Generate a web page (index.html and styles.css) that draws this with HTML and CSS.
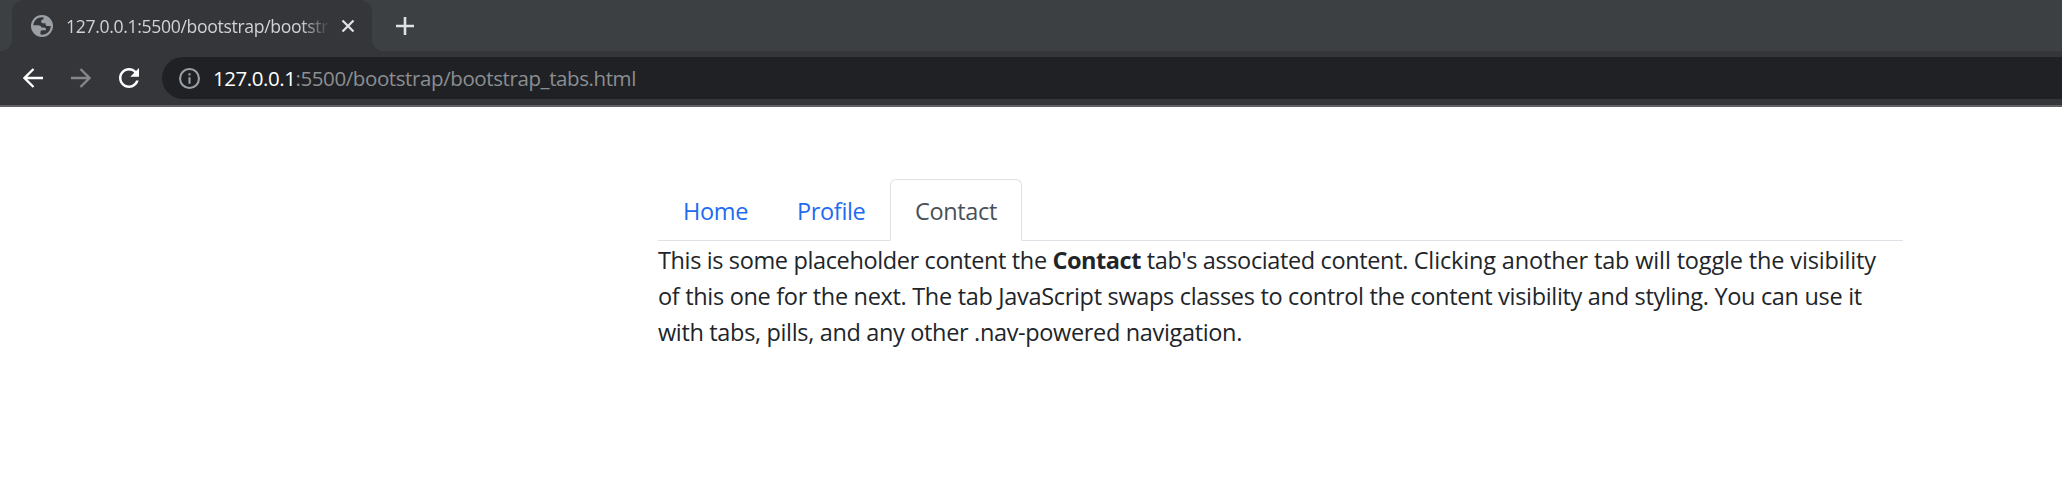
FILE: index.html
```html
<!DOCTYPE html>
<html lang="en">
<head>
<meta charset="utf-8">
<title>Bootstrap tabs</title>
<link rel="stylesheet" href="styles.css">
</head>
<body>
<header class="browser">
  <div class="tab-strip">
    <div class="browser-tab">
      <svg class="globe" viewBox="0 0 22 22"><circle cx="11" cy="11" r="11"/><path class="sea" d="M12.500 2.300C7 1.800 2.600 5.500 2.300 10.300H7c2.500 0 3 1 3.500 2.200H13c1.200 0 2 .8 2 2v.8h-3.500c-1.500 0-2 .8-2 2v2.300c5.500.8 10.200-3 10.200-8.600h-3.500c-1 0-1.700-.8-1.700-2V8.200h-2.300c-1.200 0-2-.7-2-1.800 0-1.400.8-2 2.300-2z"/></svg>
      <span class="tab-title">127.0.0.1:5500/bootstrap/bootstr</span>
      <svg class="close" viewBox="0 0 14 14"><path d="M1.500 1.500l11 11M12.500 1.500l-11 11"/></svg>
    </div>
    <svg class="plus" viewBox="0 0 18 18"><path d="M9 0v18M0 9h18"/></svg>
  </div>
  <div class="toolbar">
    <svg class="nav-icon" viewBox="0 0 20 20"><path d="M20 10H2M10.500 1L1.500 10l9 9"/></svg>
    <svg class="nav-icon disabled" viewBox="0 0 20 20"><path d="M0 10h18M9.500 1l9 9-9 9"/></svg>
    <svg class="nav-icon reload" viewBox="4 4 16 16"><path d="M17.650 6.350C16.200 4.900 14.210 4 12 4c-4.420 0-7.990 3.580-7.990 8s3.570 8 7.990 8c3.730 0 6.840-2.550 7.730-6h-2.080c-.82 2.330-3.040 4-5.650 4-3.310 0-6-2.690-6-6s2.690-6 6-6c1.660 0 3.140.69 4.220 1.780L13 11h7V4l-2.350 2.350z"/></svg>
    <div class="omnibox">
      <svg class="info" viewBox="0 0 20 20"><circle cx="10" cy="10" r="9"/><path d="M10 8.800V15M10 5v2.200"/></svg>
      <span class="url"><span class="host">127.0.0.1</span><span class="path">:5500/bootstrap/bootstrap_tabs.html</span></span>
    </div>
  </div>
</header>
<main class="container">
  <nav class="nav-tabs">
    <a class="nav-link home">Home</a>
    <a class="nav-link profile">Profile</a>
    <a class="nav-link active">Contact</a>
  </nav>
  <p class="tab-pane">
    <span class="line first">This is some placeholder content the <strong>Contact</strong> tab's associated content. <span class="ending">Clicking another tab will toggle the visibility</span></span>
    <span class="line second">of this one for the next. The tab JavaScript swaps classes to control the content visibility and styling. You can use it</span>
    <span class="line third">with tabs, pills, and any other .nav-powered navigation.</span>
  </p>
</main>
</body>
</html>
```
FILE: styles.css
```css
* { box-sizing: border-box; }
body {
  margin: 0;
  height: 495px;
  overflow: hidden;
  background: #fff;
  color: #212529;
  font: 23.500px/36px "Segoe UI", "Open Sans", "Noto Sans", sans-serif;
}
svg { display: block; flex: none; }
.browser { background: #35363a; border-bottom: 2px solid #636063; height: 107px; }
/* The tab's flared lower corners come from the strip colour on either side. */
.tab-strip {
  display: flex;
  align-items: center;
  height: 51px;
  background:
    linear-gradient(#3c4043, #3c4043) 0 0 / 12px 39px no-repeat,
    radial-gradient(circle at 0 0, #3c4043 11.500px, #35363a 12.500px) 0 39px / 12px 12px no-repeat,
    radial-gradient(circle at 100% 0, #3c4043 11.500px, #35363a 12.500px) 372px 39px / 12px 12px no-repeat,
    #3c4043;
}
.browser-tab {
  display: flex;
  align-items: center;
  width: 360px;
  height: 51px;
  margin-left: 12px;
  padding-left: 19px;
  border-radius: 12px 12px 0 0;
  background: #35363a;
}
.globe { width: 22px; height: 22px; fill: #9aa0a6; }
.sea { fill: #35363a; }
.tab-title {
  width: 264px;
  margin-left: 13px;
  white-space: nowrap;
  color: #d0d2d4;
  font-size: 17.600px;
  letter-spacing: -0.330px;
  mask-image: linear-gradient(90deg, #000 235px, transparent 264px);
}
.close { width: 14px; height: 14px; margin-left: 11px; fill: none; stroke: #dee1e6; stroke-width: 2.300; }
.plus { width: 18px; height: 18px; margin-left: 24px; fill: none; stroke: #dee1e6; stroke-width: 2.600; }
.toolbar { display: flex; align-items: center; height: 54px; padding-left: 23px; gap: 28px; }
.nav-icon { width: 20px; height: 20px; fill: none; stroke: #fff; stroke-width: 2.300; }
.disabled { stroke: #86878a; }
.reload { fill: #fff; stroke: none; }
.omnibox {
  display: flex;
  align-items: center;
  flex: 1;
  height: 42px;
  margin-left: -5px;
  padding-left: 17px;
  border-radius: 21px 0 0 21px;
  background: #202124;
}
.info { width: 21px; height: 21px; fill: none; stroke: #9aa0a6; stroke-width: 2; }
.url { margin-left: 13px; white-space: nowrap; font-size: 20.500px; }
.host { color: #fff; letter-spacing: -0.450px; }
.path { color: #8c8e91; letter-spacing: -0.400px; }
.container { width: 1245px; margin: 72px 0 0 658px; }
.nav-tabs { display: flex; height: 62px; border-bottom: 1px solid #dee2e6; }
.nav-link {
  height: 62px;
  padding: 13px 24px 0;
  border: 1px solid transparent;
  color: #226af0;
  letter-spacing: -0.350px;
  white-space: nowrap;
}
.home { width: 114px; }
.profile { width: 118px; padding-left: 24px; }
.active {
  width: 132px;
  border-color: #dee2e6;
  border-bottom-color: #fff;
  border-radius: 6px 6px 0 0;
  background: #fff;
  color: #495057;
}
.tab-pane { margin: 1px 0 0; }
.line { display: block; width: max-content; white-space: nowrap; }
.first { letter-spacing: -0.370px; }
.ending { letter-spacing: -0.150px; }
.second { letter-spacing: -0.315px; }
.third { letter-spacing: -0.340px; }
strong { font-weight: 700; letter-spacing: -0.450px; }
```
